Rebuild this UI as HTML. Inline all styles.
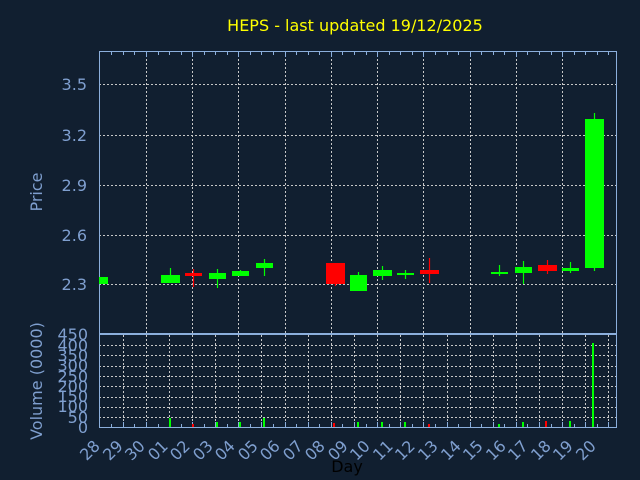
<!DOCTYPE html>
<html><head><meta charset="utf-8"><style>
html,body{margin:0;padding:0;background:#111f30;width:640px;height:480px;overflow:hidden}
svg{display:block;font-family:"DejaVu Sans","Liberation Sans",sans-serif}
</style></head><body>
<svg width="640" height="480" viewBox="0 0 640 480" xmlns="http://www.w3.org/2000/svg">
<rect width="640" height="480" fill="#111f30"/>
<text x="355" y="31" fill="#ffff00" font-size="16" text-anchor="middle">HEPS - last updated 19/12/2025</text>
<g stroke="#c8c8c8" stroke-dasharray="2,2" stroke-width="1">
<line x1="99" y1="84.5" x2="617" y2="84.5"/><line x1="99" y1="135.5" x2="617" y2="135.5"/>
<line x1="99" y1="185.5" x2="617" y2="185.5"/><line x1="99" y1="235.5" x2="617" y2="235.5"/>
<line x1="99" y1="284.5" x2="617" y2="284.5"/>
<line x1="146.5" y1="51" x2="146.5" y2="333"/><line x1="192.5" y1="51" x2="192.5" y2="333"/>
<line x1="238.5" y1="51" x2="238.5" y2="333"/><line x1="285.5" y1="51" x2="285.5" y2="333"/>
<line x1="331.5" y1="51" x2="331.5" y2="333"/><line x1="377.5" y1="51" x2="377.5" y2="333"/>
<line x1="423.5" y1="51" x2="423.5" y2="333"/><line x1="470.5" y1="51" x2="470.5" y2="333"/>
<line x1="516.5" y1="51" x2="516.5" y2="333"/><line x1="562.5" y1="51" x2="562.5" y2="333"/>
</g>
<g stroke="#c8c8c8" stroke-dasharray="2,2" stroke-width="1">
<line x1="99" y1="345.5" x2="617" y2="345.5"/><line x1="99" y1="355.5" x2="617" y2="355.5"/>
<line x1="99" y1="366.5" x2="617" y2="366.5"/><line x1="99" y1="376.5" x2="617" y2="376.5"/>
<line x1="99" y1="386.5" x2="617" y2="386.5"/><line x1="99" y1="397.5" x2="617" y2="397.5"/>
<line x1="99" y1="407.5" x2="617" y2="407.5"/><line x1="99" y1="417.5" x2="617" y2="417.5"/>
<line x1="123.5" y1="335" x2="123.5" y2="427"/><line x1="146.5" y1="335" x2="146.5" y2="427"/>
<line x1="169.5" y1="335" x2="169.5" y2="427"/><line x1="192.5" y1="335" x2="192.5" y2="427"/>
<line x1="215.5" y1="335" x2="215.5" y2="427"/><line x1="238.5" y1="335" x2="238.5" y2="427"/>
<line x1="261.5" y1="335" x2="261.5" y2="427"/><line x1="285.5" y1="335" x2="285.5" y2="427"/>
<line x1="308.5" y1="335" x2="308.5" y2="427"/><line x1="331.5" y1="335" x2="331.5" y2="427"/>
<line x1="354.5" y1="335" x2="354.5" y2="427"/><line x1="377.5" y1="335" x2="377.5" y2="427"/>
<line x1="400.5" y1="335" x2="400.5" y2="427"/><line x1="423.5" y1="335" x2="423.5" y2="427"/>
<line x1="447.5" y1="335" x2="447.5" y2="427"/><line x1="470.5" y1="335" x2="470.5" y2="427"/>
<line x1="493.5" y1="335" x2="493.5" y2="427"/><line x1="516.5" y1="335" x2="516.5" y2="427"/>
<line x1="539.5" y1="335" x2="539.5" y2="427"/><line x1="562.5" y1="335" x2="562.5" y2="427"/>
<line x1="585.5" y1="335" x2="585.5" y2="427"/><line x1="608.5" y1="335" x2="608.5" y2="427"/>
</g>
<g stroke="#8cafdc" fill="none" stroke-width="1">
<rect x="99.5" y="51.5" width="517" height="282"/>
<line x1="99.5" y1="334.5" x2="616.5" y2="334.5"/>
<rect x="99.5" y="334.5" width="517" height="93"/>
</g>
<!-- minor ticks -->
<g stroke="#8cafdc" stroke-width="1">
<path d="M111.5 52v3M123.5 52v3M134.5 52v3M146.5 52v5M158.5 52v3M169.5 52v3M181.5 52v3M192.5 52v5M204.5 52v3M215.5 52v3M227.5 52v3M238.5 52v5M250.5 52v3M261.5 52v3M273.5 52v3M285.5 52v5M296.5 52v3M308.5 52v3M319.5 52v3M331.5 52v5M342.5 52v3M354.5 52v3M366.5 52v3M377.5 52v5M389.5 52v3M400.5 52v3M412.5 52v3M423.5 52v5M435.5 52v3M447.5 52v3M458.5 52v3M470.5 52v5M481.5 52v3M493.5 52v3M504.5 52v3M516.5 52v5M527.5 52v3M539.5 52v3M551.5 52v3M562.5 52v5M574.5 52v3M585.5 52v3M597.5 52v3M608.5 52v3"/>
<path d="M111.5 427v-3M123.5 427v-5M134.5 427v-3M146.5 427v-5M158.5 427v-3M169.5 427v-5M181.5 427v-3M192.5 427v-5M204.5 427v-3M215.5 427v-5M227.5 427v-3M238.5 427v-5M250.5 427v-3M261.5 427v-5M273.5 427v-3M285.5 427v-5M296.5 427v-3M308.5 427v-5M319.5 427v-3M331.5 427v-5M342.5 427v-3M354.5 427v-5M366.5 427v-3M377.5 427v-5M389.5 427v-3M400.5 427v-5M412.5 427v-3M423.5 427v-5M435.5 427v-3M447.5 427v-5M458.5 427v-3M470.5 427v-5M481.5 427v-3M493.5 427v-5M504.5 427v-3M516.5 427v-5M527.5 427v-3M539.5 427v-5M551.5 427v-3M562.5 427v-5M574.5 427v-3M585.5 427v-5M597.5 427v-3M608.5 427v-5"/>
</g>
<g stroke-width="1.2">
<line x1="170.5" y1="268" x2="170.5" y2="276" stroke="#00ff00"/>
<line x1="193.5" y1="269" x2="193.5" y2="287" stroke="#ff0000"/>
<line x1="217.5" y1="269" x2="217.5" y2="288" stroke="#00ff00"/>
<line x1="240.5" y1="270" x2="240.5" y2="276" stroke="#00ff00"/>
<line x1="264.5" y1="259" x2="264.5" y2="276" stroke="#00ff00"/>
<line x1="335.5" y1="263" x2="335.5" y2="286" stroke="#ff0000"/>
<line x1="358.5" y1="272" x2="358.5" y2="291" stroke="#00ff00"/>
<line x1="382.5" y1="266" x2="382.5" y2="280" stroke="#00ff00"/>
<line x1="405.5" y1="270" x2="405.5" y2="279" stroke="#00ff00"/>
<line x1="429.5" y1="258" x2="429.5" y2="283" stroke="#ff0000"/>
<line x1="499.5" y1="265" x2="499.5" y2="276" stroke="#00ff00"/>
<line x1="523.5" y1="261" x2="523.5" y2="284" stroke="#00ff00"/>
<line x1="547.5" y1="260" x2="547.5" y2="274" stroke="#ff0000"/>
<line x1="570.5" y1="262" x2="570.5" y2="273" stroke="#00ff00"/>
<line x1="594.5" y1="113" x2="594.5" y2="271" stroke="#00ff00"/>
</g>
<rect x="99" y="277" width="9" height="7" fill="#00ff00"/>
<rect x="161" y="275" width="19" height="8" fill="#00ff00"/>
<rect x="185" y="273" width="17" height="3" fill="#ff0000"/>
<rect x="209" y="273" width="17" height="6" fill="#00ff00"/>
<rect x="232" y="271" width="17" height="5" fill="#00ff00"/>
<rect x="256" y="263" width="17" height="5" fill="#00ff00"/>
<rect x="326" y="263" width="19" height="21" fill="#ff0000"/>
<rect x="350" y="275" width="17" height="16" fill="#00ff00"/>
<rect x="373" y="270" width="19" height="6" fill="#00ff00"/>
<rect x="397" y="273" width="17" height="2" fill="#00ff00"/>
<rect x="420" y="270" width="19" height="4" fill="#ff0000"/>
<rect x="491" y="272" width="17" height="2" fill="#00ff00"/>
<rect x="515" y="267" width="17" height="6" fill="#00ff00"/>
<rect x="538" y="265" width="19" height="6" fill="#ff0000"/>
<rect x="562" y="268" width="17" height="3" fill="#00ff00"/>
<rect x="585" y="119" width="19" height="149" fill="#00ff00"/>
<g>
<rect x="169" y="418" width="2" height="9" fill="#00ff00"/>
<rect x="192" y="424" width="2" height="3" fill="#ff0000"/>
<rect x="216" y="422" width="2" height="5" fill="#00ff00"/>
<rect x="239" y="422" width="2" height="5" fill="#00ff00"/>
<rect x="263" y="418" width="2" height="9" fill="#00ff00"/>
<rect x="333" y="423" width="2" height="4" fill="#ff0000"/>
<rect x="357" y="422" width="2" height="5" fill="#00ff00"/>
<rect x="381" y="422" width="2" height="5" fill="#00ff00"/>
<rect x="404" y="422" width="2" height="5" fill="#00ff00"/>
<rect x="428" y="424" width="2" height="3" fill="#ff0000"/>
<rect x="498" y="424" width="2" height="3" fill="#00ff00"/>
<rect x="522" y="422" width="2" height="5" fill="#00ff00"/>
<rect x="545" y="421" width="2" height="6" fill="#ff0000"/>
<rect x="569" y="421" width="2" height="6" fill="#00ff00"/>
<rect x="592" y="343" width="2" height="84" fill="#00ff00"/>
</g>
<g fill="#7f9fcf" font-size="16" text-anchor="end">
<text x="87" y="90">3.5</text><text x="87" y="141">3.2</text>
<text x="87" y="191">2.9</text><text x="87" y="241">2.6</text>
<text x="87" y="290">2.3</text>
</g>
<text transform="translate(42,192) rotate(-90)" fill="#7f9fcf" font-size="16" text-anchor="middle">Price</text>
<g fill="#7f9fcf" font-size="16" text-anchor="end">
<text x="88" y="340">450</text><text x="88" y="351">400</text><text x="88" y="361">350</text>
<text x="88" y="371">300</text><text x="88" y="382">250</text><text x="88" y="392">200</text>
<text x="88" y="402">150</text><text x="88" y="412">100</text><text x="88" y="423">50</text>
<text x="88" y="433">0</text>
</g>
<text transform="translate(42,381) rotate(-90)" fill="#7f9fcf" font-size="16" text-anchor="middle">Volume (0000)</text>
<g fill="#7f9fcf" font-size="16" text-anchor="end">
<text transform="translate(101,447) rotate(-45)">28</text>
<text transform="translate(124,447) rotate(-45)">29</text>
<text transform="translate(146,447) rotate(-45)">30</text>
<text transform="translate(169,447) rotate(-45)">01</text>
<text transform="translate(191,447) rotate(-45)">02</text>
<text transform="translate(214,447) rotate(-45)">03</text>
<text transform="translate(236,447) rotate(-45)">04</text>
<text transform="translate(259,447) rotate(-45)">05</text>
<text transform="translate(281,447) rotate(-45)">06</text>
<text transform="translate(304,447) rotate(-45)">07</text>
<text transform="translate(326,447) rotate(-45)">08</text>
<text transform="translate(349,447) rotate(-45)">09</text>
<text transform="translate(371,447) rotate(-45)">10</text>
<text transform="translate(394,447) rotate(-45)">11</text>
<text transform="translate(416,447) rotate(-45)">12</text>
<text transform="translate(439,447) rotate(-45)">13</text>
<text transform="translate(462,447) rotate(-45)">14</text>
<text transform="translate(484,447) rotate(-45)">15</text>
<text transform="translate(507,447) rotate(-45)">16</text>
<text transform="translate(529,447) rotate(-45)">17</text>
<text transform="translate(552,447) rotate(-45)">18</text>
<text transform="translate(574,447) rotate(-45)">19</text>
<text transform="translate(597,447) rotate(-45)">20</text>
</g>
<text x="347" y="472" fill="#000000" font-size="16" text-anchor="middle">Day</text>
</svg>
</body></html>
